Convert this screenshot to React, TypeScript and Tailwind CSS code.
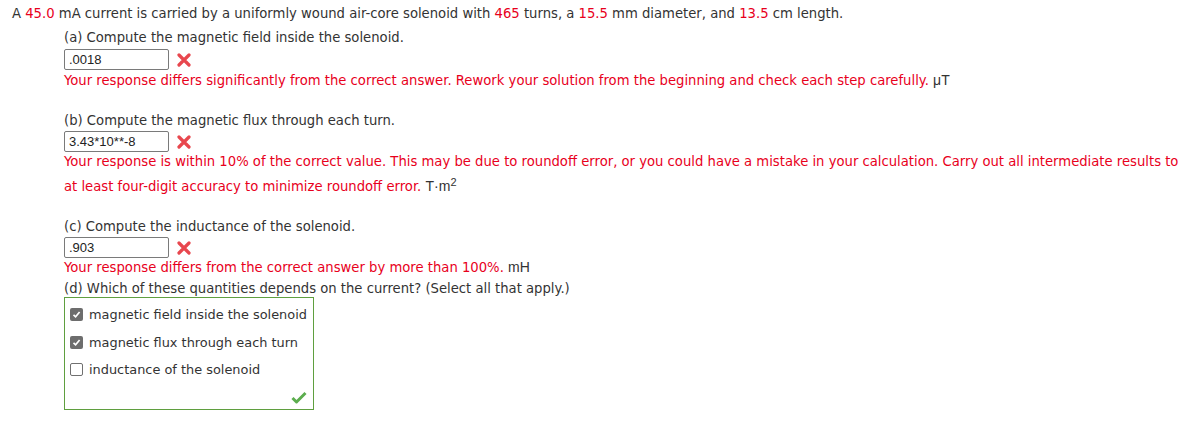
import React from "react";

const red = "text-[#e8001c]";

function XMark() {
  return (
    <svg width="14" height="14" viewBox="0 0 14 14" className="ml-[8px] mt-[4px]">
      <path d="M2 2 L12 12 M12 2 L2 12" stroke="#e8474e" strokeWidth="3.2" strokeLinecap="round" />
    </svg>
  );
}

function Answer({ value }: { value: string }) {
  return (
    <div className="flex items-start">
      <div className="w-[105px] h-[21px] border border-[#7a7a7a] rounded-[2px] px-[4px] flex items-center text-[13px] text-[#222] font-['Liberation_Sans',Arial,sans-serif]">
        {value}
      </div>
      <XMark />
    </div>
  );
}

function Unit({ children }: { children: React.ReactNode }) {
  return <span className="text-[#333] font-['Liberation_Sans',Arial,sans-serif] text-[14px]">{children}</span>;
}

function Box({ checked }: { checked: boolean }) {
  return checked ? (
    <span className="w-[13px] h-[13px] rounded-[2px] bg-[#6d6d6d] flex items-center justify-center">
      <svg width="9" height="9" viewBox="0 0 9 9">
        <path d="M1.5 4.8 L3.6 6.8 L7.6 2" stroke="#fff" strokeWidth="1.7" fill="none" />
      </svg>
    </span>
  ) : (
    <span className="w-[13px] h-[13px] rounded-[2px] border border-[#707070] bg-white" />
  );
}

export default function App() {
  return (
    <div className="w-[1195px] h-[431px] bg-white text-[#333] text-[13.2px] font-['DejaVu_Sans',Verdana,sans-serif] pl-[12px] pt-[5px]">
      <p className="leading-[18px]">
        A <span className={red}>45.0</span> mA current is carried by a uniformly wound air-core solenoid with{" "}
        <span className={red}>465</span> turns, a <span className={red}>15.5</span> mm diameter, and{" "}
        <span className={red}>13.5</span> cm length.
      </p>
      <div className="pl-[52px]">
        <p className="mt-[6px] leading-[18px]">(a) Compute the magnetic field inside the solenoid.</p>
        <div className="mt-[2px]"><Answer value=".0018" /></div>
        <p className={`${red} leading-[20px]`}>
          Your response differs significantly from the correct answer. Rework your solution from the beginning and check each step carefully. <Unit>μT</Unit>
        </p>

        <p className="mt-[21px] leading-[18px]">(b) Compute the magnetic flux through each turn.</p>
        <div className="mt-[1px]"><Answer value="3.43*10**-8" /></div>
        <p className={`${red} leading-[24px] -mt-[2px]`}>
          Your response is within 10% of the correct value. This may be due to roundoff error, or you could have a mistake in your calculation. Carry out all intermediate results to at least four-digit accuracy to minimize roundoff error.{" "}
          <Unit>
            T·m<sup className="text-[11px] leading-none">2</sup>
          </Unit>
        </p>

        <p className="mt-[19px] leading-[18px]">(c) Compute the inductance of the solenoid.</p>
        <div className="mt-[1px]"><Answer value=".903" /></div>
        <p className={`${red} leading-[20px] -mt-[1px]`}>
          Your response differs from the correct answer by more than 100%. <Unit>mH</Unit>
        </p>
        <p className="mt-[2px] leading-[18px]">(d) Which of these quantities depends on the current? (Select all that apply.)</p>
        <div className="-mt-[1px] w-[250px] h-[113px] border border-[#5f9f3f] pl-[5px] pt-[3px] flex flex-col relative text-[12.9px]">
          {[
            ["magnetic field inside the solenoid", true],
            ["magnetic flux through each turn", true],
            ["inductance of the solenoid", false],
          ].map(([label, c]) => (
            <div key={label as string} className="flex items-center gap-[6px] h-[27.5px]">
              <Box checked={c as boolean} />
              <span>{label as string}</span>
            </div>
          ))}
          <svg width="16" height="13" viewBox="0 0 16 13" className="absolute right-[6px] bottom-[5px]">
            <path d="M1.5 7 L5.5 11 L14.5 2" stroke="#5cad4e" strokeWidth="3" fill="none" strokeLinejoin="round" />
          </svg>
        </div>
      </div>
    </div>
  );
}
